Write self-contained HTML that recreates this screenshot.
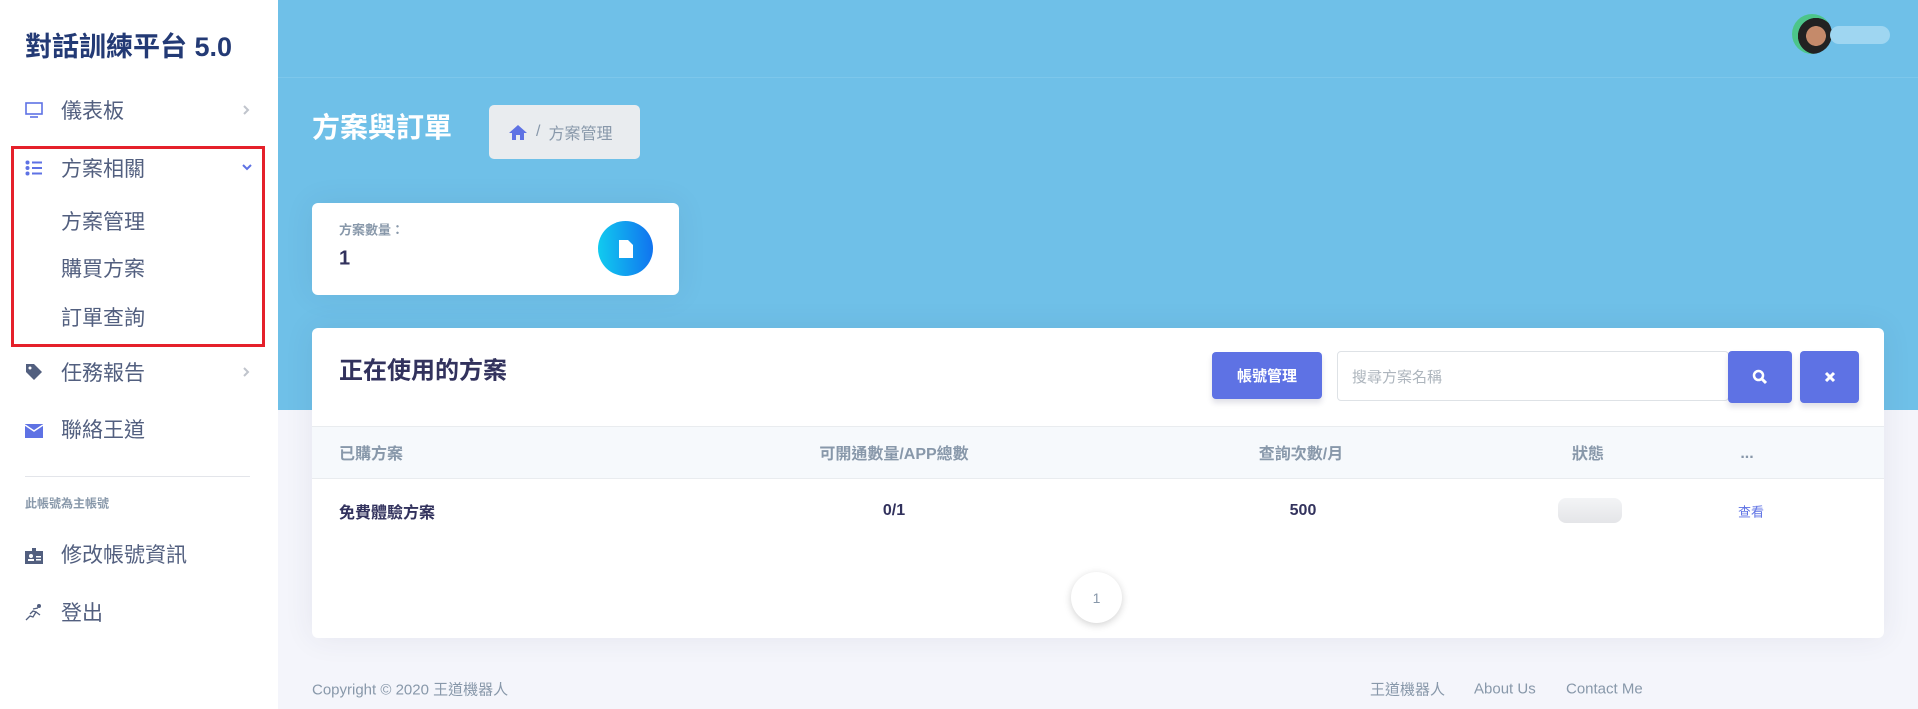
<!DOCTYPE html>
<html><head><meta charset="utf-8"><style>
*{box-sizing:border-box;margin:0;padding:0}
body{width:1918px;height:709px;overflow:hidden;background:#f4f5fb;font-family:"Liberation Sans","Noto Sans CJK TC",sans-serif;position:relative}
.abs{position:absolute}
#side{left:0;top:0;width:278px;height:709px;background:#fff;z-index:2}
.brand{left:25px;top:25px;font-size:27px;font-weight:bold;color:#233a75;white-space:nowrap}
.mi{left:61px;font-size:21px;color:#525f7f;white-space:nowrap;transform:translateY(-50%)}
.ic{left:25px;transform:translateY(-50%)}
.chev{left:242px;transform:translateY(-50%)}
#hdr{left:278px;top:0;width:1640px;height:410px;background:#6fc0e8}
.card{background:#fff;border-radius:6px;box-shadow:0 0 30px rgba(50,50,93,.08)}
.th{top:452px;font-size:16px;font-weight:bold;color:#8898aa;transform:translate(-50%,-50%);white-space:nowrap}
.td{top:511px;font-size:16px;font-weight:bold;color:#32325d;transform:translate(-50%,-50%);white-space:nowrap}
.btn{background:#5e72e4;border-radius:4px;box-shadow:0 4px 6px rgba(50,50,93,.15);color:#fff;display:flex;align-items:center;justify-content:center}
.ft{top:689px;font-size:15px;color:#8898aa;transform:translateY(-50%);white-space:nowrap}
</style></head><body>
<div id="side" class="abs">
<div class="abs brand">對話訓練平台 5.0</div>
<svg class="abs ic" style="top:110px" width="18" height="16" viewBox="0 0 18 16"><rect x="1" y="1" width="16" height="11" fill="none" stroke="#5e72e4" stroke-width="1.6"/><path d="M5 15h8" stroke="#5e72e4" stroke-width="1.6"/></svg>
<div class="abs mi" style="top:110px">儀表板</div>
<svg class="abs chev" style="top:110px" width="8" height="12" viewBox="0 0 8 12"><path d="M2 2l4 4-4 4" fill="none" stroke="#c0c4cc" stroke-width="2"/></svg>
<svg class="abs ic" style="top:168px" width="18" height="16" viewBox="0 0 18 16"><g fill="#5e72e4"><circle cx="2.5" cy="2.5" r="2"/><circle cx="2.5" cy="8" r="2"/><circle cx="2.5" cy="13.5" r="2"/><rect x="7" y="1.5" width="10" height="2"/><rect x="7" y="7" width="10" height="2"/><rect x="7" y="12.5" width="10" height="2"/></g></svg>
<div class="abs mi" style="top:168px">方案相關</div>
<svg class="abs" style="left:242px;top:163px" width="10" height="8" viewBox="0 0 10 8"><path d="M1 2l4 4 4-4" fill="none" stroke="#5e72e4" stroke-width="2"/></svg>
<div class="abs mi" style="top:221px">方案管理</div>
<div class="abs mi" style="top:268px">購買方案</div>
<div class="abs mi" style="top:317px">訂單查詢</div>
<div class="abs" style="left:11px;top:146px;width:254px;height:201px;border:3px solid #e5202a"></div>
<svg class="abs ic" style="top:372px" width="18" height="18" viewBox="0 0 18 18"><path d="M1 1h8l8 8-8 8-8-8z" fill="#525f7f"/><circle cx="5" cy="5" r="1.5" fill="#fff"/></svg>
<div class="abs mi" style="top:372px">任務報告</div>
<svg class="abs chev" style="top:372px" width="8" height="12" viewBox="0 0 8 12"><path d="M2 2l4 4-4 4" fill="none" stroke="#c0c4cc" stroke-width="2"/></svg>
<svg class="abs ic" style="top:431px" width="18" height="14" viewBox="0 0 18 14"><rect width="18" height="14" fill="#5e72e4"/><path d="M0 1l9 6 9-6" fill="none" stroke="#fff" stroke-width="1.5"/></svg>
<div class="abs mi" style="top:429px">聯絡王道</div>
<div class="abs" style="left:25px;top:476px;width:225px;height:1px;background:#e3e5ea"></div>
<div class="abs" style="left:25px;top:503px;font-size:12px;font-weight:bold;color:#8898aa;transform:translateY(-50%)">此帳號為主帳號</div>
<svg class="abs ic" style="top:556px" width="18" height="16" viewBox="0 0 18 16"><rect y="3" width="18" height="13" fill="#525f7f"/><rect x="7" y="0" width="4" height="5" fill="#525f7f"/><circle cx="6" cy="8" r="2" fill="#fff"/><rect x="3" y="11" width="6" height="2" fill="#fff"/><rect x="11" y="8" width="5" height="1.5" fill="#fff"/><rect x="11" y="11" width="5" height="1.5" fill="#fff"/></svg>
<div class="abs mi" style="top:554px">修改帳號資訊</div>
<svg class="abs ic" style="top:612px" width="18" height="18" viewBox="0 0 18 18"><circle cx="14" cy="3" r="2" fill="#525f7f"/><path d="M1 17l4-4 3 1 3-5-3-1-3 3M11 9l4 3M8 6l5-1" fill="none" stroke="#525f7f" stroke-width="1.3"/></svg>
<div class="abs mi" style="top:612px">登出</div>
</div>
<div id="hdr" class="abs"></div>
<div class="abs" style="left:278px;top:77px;width:1640px;height:1px;background:#7dc7eb"></div>
<div class="abs" style="left:1792px;top:14px;width:40px;height:40px;border-radius:50%;background:radial-gradient(circle at 60% 55%,#c58a6a 0 30%,#222 31% 55%,#4cc58a 56%)"></div>
<div class="abs" style="left:1830px;top:26px;width:60px;height:18px;border-radius:9px;background:#9fd6f1"></div>
<div class="abs" style="left:312px;top:126px;font-size:28px;font-weight:bold;color:#fff;transform:translateY(-50%)">方案與訂單</div>
<div class="abs" style="left:489px;top:105px;width:151px;height:54px;background:#e9ecef;border-radius:5px;display:flex;align-items:center;padding-left:19px;font-size:16px;color:#8898aa">
<svg width="20" height="17" viewBox="0 0 20 17"><path d="M10 1L1 9h3v7h4v-5h4v5h4V9h3z" fill="#5e72e4"/></svg><span style="margin:0 8px">/</span>方案管理</div>
<div class="abs card" style="left:312px;top:203px;width:367px;height:92px"></div>
<div class="abs" style="left:339px;top:229px;font-size:13px;font-weight:bold;color:#8898aa;transform:translateY(-50%)">方案數量：</div>
<div class="abs" style="left:339px;top:259px;font-size:20px;font-weight:bold;color:#32325d;transform:translateY(-50%)">1</div>
<div class="abs" style="left:598px;top:221px;width:55px;height:55px;border-radius:50%;background:linear-gradient(87deg,#11cdef,#1171ef);display:flex;align-items:center;justify-content:center"><svg width="14" height="18" viewBox="0 0 14 18"><path d="M0 0h9l5 5v13H0z" fill="#fff"/></svg></div>
<div class="abs card" style="left:312px;top:328px;width:1572px;height:310px"></div>
<div class="abs" style="left:339px;top:368px;font-size:24px;font-weight:bold;color:#32325d;transform:translateY(-50%)">正在使用的方案</div>
<div class="abs btn" style="left:1212px;top:352px;width:110px;height:47px;font-size:15px;font-weight:bold">帳號管理</div>
<div class="abs" style="left:1337px;top:351px;width:392px;height:50px;border:1px solid #dee2e6;border-radius:4px;background:#fff;padding-left:14px;display:flex;align-items:center;font-size:15px;color:#adb5bd">搜尋方案名稱</div>
<div class="abs btn" style="left:1728px;top:351px;width:64px;height:52px"><svg width="16" height="16" viewBox="0 0 16 16"><circle cx="6.5" cy="6.5" r="4.5" fill="none" stroke="#fff" stroke-width="2.5"/><path d="M10 10l4 4" stroke="#fff" stroke-width="3"/></svg></div>
<div class="abs btn" style="left:1800px;top:351px;width:59px;height:52px"><svg width="12" height="12" viewBox="0 0 12 12"><path d="M2 2l8 8M10 2l-8 8" stroke="#fff" stroke-width="3"/></svg></div>
<div class="abs" style="left:312px;top:426px;width:1572px;height:53px;background:#f6f9fc;border-top:1px solid #e9ecef;border-bottom:1px solid #e9ecef"></div>
<div class="abs th" style="left:339px;transform:translateY(-50%)">已購方案</div>
<div class="abs th" style="left:894px">可開通數量/APP總數</div>
<div class="abs th" style="left:1301px">查詢次數/月</div>
<div class="abs th" style="left:1588px">狀態</div>
<div class="abs th" style="left:1747px;transform:translate(-50%,-40%)">...</div>
<div class="abs td" style="left:339px;transform:translateY(-50%)">免費體驗方案</div>
<div class="abs td" style="left:894px">0/1</div>
<div class="abs td" style="left:1303px">500</div>
<div class="abs" style="left:1558px;top:498px;width:64px;height:25px;border-radius:8px;background:linear-gradient(#f3f4f6,#e4e5e8)"></div>
<div class="abs" style="left:1738px;top:511px;font-size:13px;color:#5e72e4;transform:translateY(-50%)">查看</div>
<div class="abs" style="left:1071px;top:572px;width:51px;height:51px;border-radius:50%;background:#fff;box-shadow:0 2px 8px rgba(0,0,0,.18);display:flex;align-items:center;justify-content:center;font-size:14px;color:#8898aa">1</div>
<div class="abs ft" style="left:312px">Copyright © 2020 王道機器人</div>
<div class="abs ft" style="left:1370px">王道機器人</div>
<div class="abs ft" style="left:1474px">About Us</div>
<div class="abs ft" style="left:1566px">Contact Me</div>
</body></html>
